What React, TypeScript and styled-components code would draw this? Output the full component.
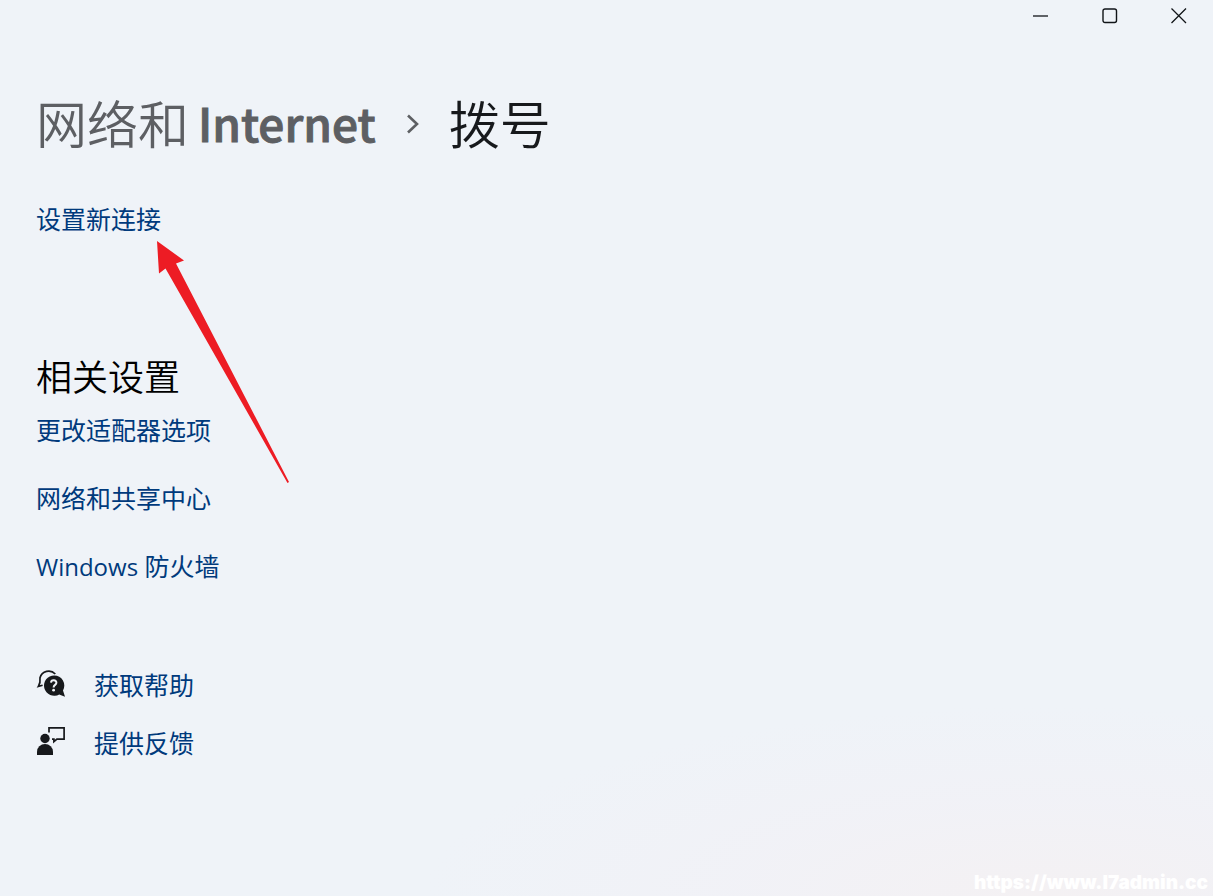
import React from "react";
import styled, { createGlobalStyle } from "styled-components";

const GlobalStyle = createGlobalStyle`
  *, *::before, *::after { box-sizing: border-box; }
  html, body { margin: 0; padding: 0; }
  body {
    font-family: "Noto Sans CJK SC", sans-serif;
    background: #eff3f8;
  }
`;

const Window = styled.div`
  position: relative;
  min-height: 100vh;
  display: flex;
  flex-direction: column;
  overflow: hidden;
  background:
    radial-gradient(ellipse 620px 190px at 86% 100%, #f4f1f3 0%, rgba(242, 241, 246, 0.7) 50%, rgba(239, 243, 248, 0) 100%),
    #eff3f8;
`;

const TitleBar = styled.header`
  display: flex;
  justify-content: flex-end;
  height: 32px;
`;

const CaptionButton = styled.button`
  display: flex;
  align-items: center;
  justify-content: center;
  width: 69px;
  height: 31px;
  padding: 0;
  border: 0;
  background: transparent;
  color: #111418;
`;

const Page = styled.main`
  display: flex;
  flex-direction: column;
  padding: 54px 36px 0;
`;

const Breadcrumb = styled.nav`
  display: flex;
  align-items: center;
  height: 72px;
  font-size: 51px;
  line-height: 72px;
  white-space: nowrap;
`;

const Crumb = styled.a`
  display: flex;
  align-items: center;
  gap: 9px;
  color: #5d5f63;
  text-decoration: none;
`;

const Chinese = styled.span`
  font-weight: 350;
`;

const Latin = styled.span`
  font-size: 46px;
  font-weight: 500;
  -webkit-text-stroke: 1px currentColor;
`;

const Chevron = styled.svg`
  flex: none;
  margin: 4px 28px 0 29px;
`;

const PageTitle = styled.h1`
  margin: 0;
  font-size: 51px;
  font-weight: 350;
  line-height: 72px;
  color: #17191c;
`;

const Section = styled.section<{ $top: number }>`
  display: flex;
  flex-direction: column;
  align-items: flex-start;
  margin-top: ${(p) => p.$top}px;
`;

const SectionTitle = styled.h2`
  margin: 0 0 19px;
  font-size: 36px;
  font-weight: 350;
  line-height: 36px;
  color: #000;
`;

const LinkList = styled.ul<{ $gap: number }>`
  display: flex;
  flex-direction: column;
  gap: ${(p) => p.$gap}px;
  margin: 0;
  padding: 0;
  list-style: none;
`;

const TextLink = styled.a`
  display: block;
  height: 36px;
  font-family: "Open Sans", "Noto Sans CJK SC", sans-serif;
  font-size: 25px;
  font-weight: 400;
  line-height: 36px;
  color: #003a7c;
  text-decoration: none;
  white-space: nowrap;
`;

const Word = styled.span`
  font-size: 24px;
`;

const HelpItem = styled.li`
  display: flex;
  align-items: flex-start;
  gap: 29px;
`;

const ItemIcon = styled.svg`
  flex: none;
  margin-top: 2px;
  color: #17191c;
`;

const Arrow = styled.svg`
  position: absolute;
  left: 156px;
  top: 240px;
  pointer-events: none;
`;

const Watermark = styled.div`
  position: absolute;
  right: 5px;
  bottom: 2px;
  font-family: Inter, sans-serif;
  font-size: 19px;
  font-weight: 900;
  line-height: 22px;
  color: #fff;
`;

const relatedLinks = [
  { id: "adapter", label: "更改适配器选项" },
  { id: "sharing", label: "网络和共享中心" },
  { id: "firewall", word: "Windows", label: " 防火墙" },
];

const HelpIcon = () => (
  <ItemIcon width="29" height="28" viewBox="-1 0 29 28" aria-hidden="true">
    <path
      d="M18.3 5A9 9 0 0 0 3 8.800Q3.600 13.500 1.400 17.400L5.600 16.200"
      fill="none"
      stroke="currentColor"
      strokeWidth="1.7"
    />
    <path
      d="M17.2 6.4a10.200 10.200 0 1 0 5 19.100l5.800 2.300-2-6.200A10.200 10.200 0 0 0 17.200 6.400z"
      fill="currentColor"
    />
    <path
      d="M14 13.600a2.700 2.500 0 0 1 5.400.2c0 2.200-2.800 2-2.800 4.600"
      fill="none"
      stroke="#f0f3f8"
      strokeWidth="2"
    />
    <circle cx="16.600" cy="21.200" r="1.400" fill="#f0f3f8" />
  </ItemIcon>
);

const FeedbackIcon = () => (
  <ItemIcon width="29" height="28" viewBox="-1 0 29 28" aria-hidden="true">
    <circle cx="8" cy="11.500" r="4.700" fill="currentColor" />
    <path d="M0 28v-3.200a7.900 7.600 0 0 1 16 0V28z" fill="currentColor" />
    <path
      d="M12 5.500V.9h15.100v11.200h-7.200l-3 2.600v-2.600H15"
      fill="none"
      stroke="currentColor"
      strokeWidth="1.700"
    />
  </ItemIcon>
);

export default function App() {
  return (
    <>
      <GlobalStyle />
      <Window>
        <TitleBar>
          <CaptionButton type="button" aria-label="最小化">
            <svg width="16" height="16" viewBox="0 0 16 16">
              <path d="M0 8h15" stroke="currentColor" strokeWidth="1.300" />
            </svg>
          </CaptionButton>
          <CaptionButton type="button" aria-label="最大化">
            <svg width="16" height="16" viewBox="0 0 16 16">
              <rect x="1" y="1" width="13.500" height="13.500" rx="2" fill="none" stroke="currentColor" strokeWidth="1.400" />
            </svg>
          </CaptionButton>
          <CaptionButton type="button" aria-label="关闭">
            <svg width="16" height="16" viewBox="0 0 16 16">
              <path d="M.5.5l14.500 14.500M15 .5L.5 15" stroke="currentColor" strokeWidth="1.300" />
            </svg>
          </CaptionButton>
        </TitleBar>

        <Page>
          <Breadcrumb>
            <Crumb href="#network">
              <Chinese>网络和</Chinese>
              <Latin>Internet</Latin>
            </Crumb>
            <Chevron width="16" height="22" viewBox="0 0 16 22" aria-hidden="true">
              <path d="M3 2.500l9 8.500-9 8.500" fill="none" stroke="#5d5f63" strokeWidth="2.600" />
            </Chevron>
            <PageTitle>拨号</PageTitle>
          </Breadcrumb>

          <Section $top={43}>
            <TextLink href="#new-connection">设置新连接</TextLink>
          </Section>

          <Section $top={120}>
            <SectionTitle>相关设置</SectionTitle>
            <LinkList $gap={32}>
              {relatedLinks.map(({ id, word, label }) => (
                <li key={id}>
                  <TextLink href={`#${id}`}>
                    {word && <Word>{word}</Word>}
                    {label}
                  </TextLink>
                </li>
              ))}
            </LinkList>
          </Section>

          <Section $top={83}>
            <LinkList $gap={22}>
              <HelpItem>
                <HelpIcon />
                <TextLink href="#help">获取帮助</TextLink>
              </HelpItem>
              <HelpItem>
                <FeedbackIcon />
                <TextLink href="#feedback">提供反馈</TextLink>
              </HelpItem>
            </LinkList>
          </Section>
        </Page>

        <Arrow width="134" height="244" viewBox="0 0 134 244" aria-hidden="true">
          <path d="M1 1L28 20.500L20 23.500L133 242L131.500 243L9.500 28.500L3 33.500Z" fill="#ed1c24" />
        </Arrow>
        <Watermark>https://www.l7admin.cc</Watermark>
      </Window>
    </>
  );
}
